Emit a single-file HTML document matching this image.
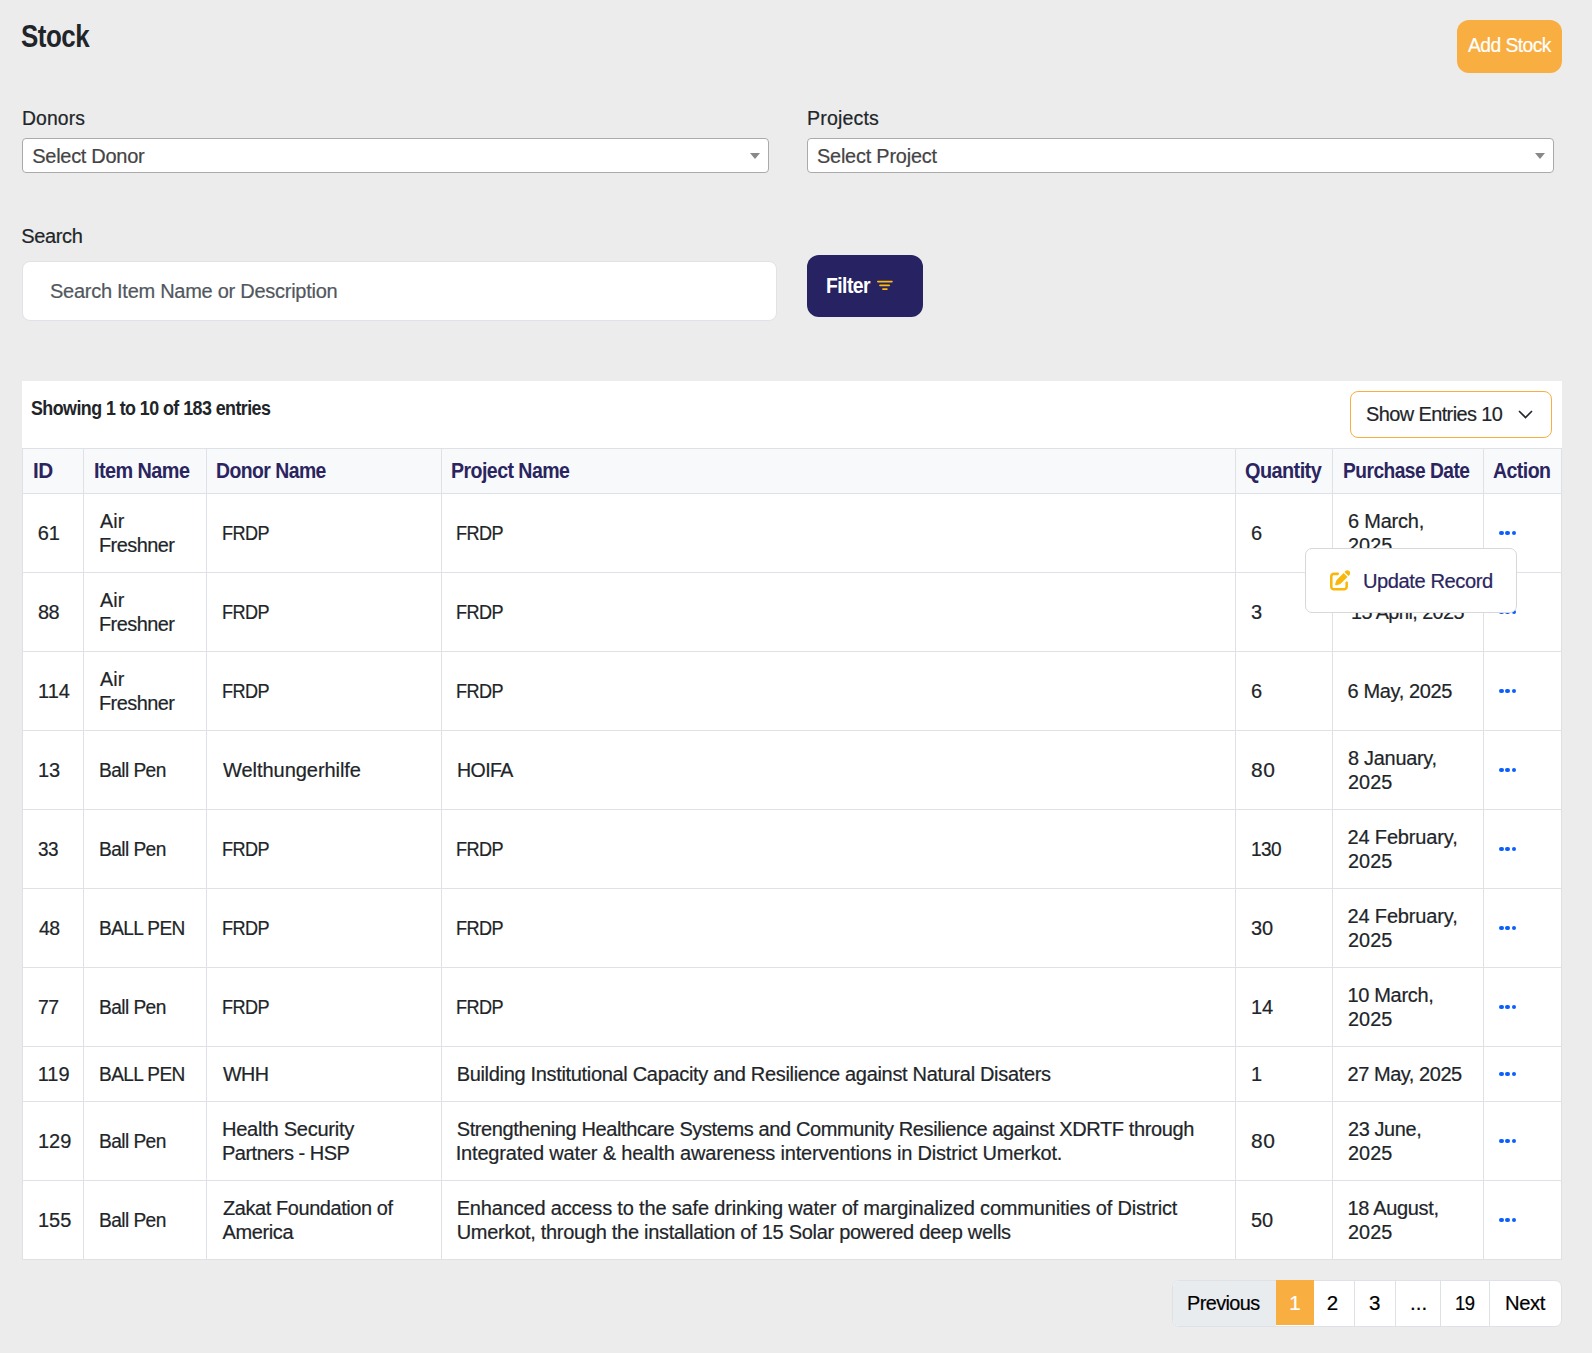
<!DOCTYPE html>
<html><head><meta charset="utf-8"><title>Stock</title>
<style>
html,body{margin:0;padding:0;}
body{width:1592px;height:1353px;background:#ececec;position:relative;overflow:hidden;font-family:"Liberation Sans", sans-serif;}
.t{position:absolute;white-space:nowrap;line-height:1;}
.w4{-webkit-text-stroke:0.2px currentColor;}
.r{position:absolute;}
</style></head><body>
<div class="t" style="left:21.20px;top:21.00px;font-size:31px;color:#212529;font-weight:700;letter-spacing:-0.600px;transform:scaleX(0.8371);transform-origin:0 0;">Stock</div>
<div class="r" style="left:1457px;top:20px;width:105px;height:53px;background:#f9ae42;border-radius:12px;"></div>
<div class="t w4" style="left:1468.00px;top:35.00px;font-size:20px;color:#fff;font-weight:400;letter-spacing:-0.600px;transform:scaleX(0.9651);transform-origin:0 0;">Add Stock</div>
<div class="t w4" style="left:21.90px;top:109.00px;font-size:19.5px;color:#212529;font-weight:400;letter-spacing:0.100px;transform:scaleX(0.9920);transform-origin:0 0;">Donors</div>
<div class="t w4" style="left:806.50px;top:109.00px;font-size:19.5px;color:#212529;font-weight:400;letter-spacing:0.157px;transform:scaleX(1.0043);transform-origin:0 0;">Projects</div>
<div class="r" style="left:22px;top:138px;width:747px;height:35px;background:#fff;border:1px solid #aaa;border-radius:4px;box-sizing:border-box;"></div>
<div class="r" style="left:750px;top:153px;width:0;height:0;border-style:solid;border-width:6px 5px 0 5px;border-color:#888 transparent transparent transparent;"></div>
<div class="r" style="left:807px;top:138px;width:747px;height:35px;background:#fff;border:1px solid #aaa;border-radius:4px;box-sizing:border-box;"></div>
<div class="r" style="left:1535px;top:153px;width:0;height:0;border-style:solid;border-width:6px 5px 0 5px;border-color:#888 transparent transparent transparent;"></div>
<div class="t w4" style="left:32.30px;top:146.00px;font-size:20px;color:#444;font-weight:400;letter-spacing:-0.300px;">Select Donor</div>
<div class="t w4" style="left:817.20px;top:146.00px;font-size:20px;color:#444;font-weight:400;letter-spacing:-0.200px;transform:scaleX(0.9934);transform-origin:0 0;">Select Project</div>
<div class="t w4" style="left:21.20px;top:226.00px;font-size:20px;color:#212529;font-weight:400;letter-spacing:-0.340px;">Search</div>
<div class="r" style="left:22px;top:261px;width:755px;height:60px;background:#fff;border:1px solid #dfe3e8;border-radius:8px;box-sizing:border-box;"></div>
<div class="t w4" style="left:50.00px;top:281.00px;font-size:20px;color:#51575e;font-weight:400;letter-spacing:-0.267px;">Search Item Name or Description</div>
<div class="r" style="left:807px;top:255px;width:116px;height:62px;background:#272262;border-radius:12px;"></div>
<div class="t" style="left:826.20px;top:275.00px;font-size:22px;color:#fff;font-weight:700;letter-spacing:-0.600px;transform:scaleX(0.8781);transform-origin:0 0;">Filter</div>
<svg class="r" style="left:876px;top:280px" width="18" height="12" viewBox="0 0 18 12"><rect x="1" y="0.7" width="15.8" height="1.7" rx="0.8" fill="#fdbb0a"/><rect x="3.2" y="4.55" width="10.8" height="1.7" rx="0.8" fill="#fdbb0a"/><rect x="6.1" y="8.25" width="5.6" height="1.7" rx="0.8" fill="#fdbb0a"/></svg>
<div class="r" style="left:22px;top:381px;width:1540px;height:879px;background:#fff;"></div>
<div class="t" style="left:31.20px;top:399.00px;font-size:19.5px;color:#212529;font-weight:700;letter-spacing:-0.600px;transform:scaleX(0.9150);transform-origin:0 0;">Showing 1 to 10 of 183 entries</div>
<div class="r" style="left:1350px;top:391px;width:202px;height:47px;border:1px solid #f9ae42;border-radius:8px;box-sizing:border-box;"></div>
<div class="t w4" style="left:1365.60px;top:404.00px;font-size:20.5px;color:#212529;font-weight:400;letter-spacing:-0.600px;transform:scaleX(0.9720);transform-origin:0 0;">Show Entries 10</div>
<svg class="r" style="left:1517px;top:408px" width="17" height="13" viewBox="0 0 17 13"><polyline points="2,3 8.5,9.5 15,3" fill="none" stroke="#212529" stroke-width="1.6"/></svg>
<div class="r" style="left:22px;top:448px;width:1540px;height:45px;background:#f8f9fa;"></div>
<div class="r" style="left:22px;top:448px;width:1540px;height:1px;background:#dee2e6;"></div>
<div class="r" style="left:22px;top:493px;width:1540px;height:1px;background:#dee2e6;"></div>
<div class="r" style="left:22px;top:572px;width:1540px;height:1px;background:#dee2e6;"></div>
<div class="r" style="left:22px;top:651px;width:1540px;height:1px;background:#dee2e6;"></div>
<div class="r" style="left:22px;top:730px;width:1540px;height:1px;background:#dee2e6;"></div>
<div class="r" style="left:22px;top:809px;width:1540px;height:1px;background:#dee2e6;"></div>
<div class="r" style="left:22px;top:888px;width:1540px;height:1px;background:#dee2e6;"></div>
<div class="r" style="left:22px;top:967px;width:1540px;height:1px;background:#dee2e6;"></div>
<div class="r" style="left:22px;top:1046px;width:1540px;height:1px;background:#dee2e6;"></div>
<div class="r" style="left:22px;top:1101px;width:1540px;height:1px;background:#dee2e6;"></div>
<div class="r" style="left:22px;top:1180px;width:1540px;height:1px;background:#dee2e6;"></div>
<div class="r" style="left:22px;top:1259px;width:1540px;height:1px;background:#dee2e6;"></div>
<div class="r" style="left:22px;top:448px;width:1px;height:812px;background:#dee2e6;"></div>
<div class="r" style="left:83px;top:448px;width:1px;height:812px;background:#dee2e6;"></div>
<div class="r" style="left:206px;top:448px;width:1px;height:812px;background:#dee2e6;"></div>
<div class="r" style="left:441px;top:448px;width:1px;height:812px;background:#dee2e6;"></div>
<div class="r" style="left:1235px;top:448px;width:1px;height:812px;background:#dee2e6;"></div>
<div class="r" style="left:1332px;top:448px;width:1px;height:812px;background:#dee2e6;"></div>
<div class="r" style="left:1483px;top:448px;width:1px;height:812px;background:#dee2e6;"></div>
<div class="r" style="left:1561px;top:448px;width:1px;height:812px;background:#dee2e6;"></div>
<div class="t" style="left:32.60px;top:461.00px;font-size:21.5px;color:#2a2560;font-weight:700;letter-spacing:-0.600px;transform:scaleX(0.9632);transform-origin:0 0;">ID</div>
<div class="t" style="left:93.70px;top:461.00px;font-size:21.5px;color:#2a2560;font-weight:700;letter-spacing:-0.600px;transform:scaleX(0.9236);transform-origin:0 0;">Item Name</div>
<div class="t" style="left:216.30px;top:461.00px;font-size:21.5px;color:#2a2560;font-weight:700;letter-spacing:-0.600px;transform:scaleX(0.9017);transform-origin:0 0;">Donor Name</div>
<div class="t" style="left:451.00px;top:461.00px;font-size:21.5px;color:#2a2560;font-weight:700;letter-spacing:-0.600px;transform:scaleX(0.9093);transform-origin:0 0;">Project Name</div>
<div class="t" style="left:1245.00px;top:461.00px;font-size:21.5px;color:#2a2560;font-weight:700;letter-spacing:-0.600px;transform:scaleX(0.9244);transform-origin:0 0;">Quantity</div>
<div class="t" style="left:1342.50px;top:461.00px;font-size:21.5px;color:#2a2560;font-weight:700;letter-spacing:-0.600px;transform:scaleX(0.8929);transform-origin:0 0;">Purchase Date</div>
<div class="t" style="left:1493.30px;top:461.00px;font-size:21.5px;color:#2a2560;font-weight:700;letter-spacing:-0.600px;transform:scaleX(0.9081);transform-origin:0 0;">Action</div>
<div class="t w4" style="left:37.70px;top:523.00px;font-size:20px;color:#212529;font-weight:400;letter-spacing:0.000px;">61</div>
<div class="t w4" style="left:99.50px;top:511.00px;font-size:20px;color:#212529;font-weight:400;letter-spacing:0.100px;transform:scaleX(0.9842);transform-origin:0 0;">Air</div>
<div class="t w4" style="left:98.50px;top:535.00px;font-size:20px;color:#212529;font-weight:400;letter-spacing:-0.543px;transform:scaleX(0.9948);transform-origin:0 0;">Freshner</div>
<div class="t w4" style="left:221.50px;top:523.00px;font-size:20px;color:#212529;font-weight:400;letter-spacing:-0.600px;transform:scaleX(0.9041);transform-origin:0 0;">FRDP</div>
<div class="t w4" style="left:455.50px;top:523.00px;font-size:20px;color:#212529;font-weight:400;letter-spacing:-0.600px;transform:scaleX(0.9041);transform-origin:0 0;">FRDP</div>
<div class="t w4" style="left:1251.00px;top:523.00px;font-size:20px;color:#212529;font-weight:400;letter-spacing:0.000px;">6</div>
<div class="t w4" style="left:1347.50px;top:511.00px;font-size:20px;color:#212529;font-weight:400;letter-spacing:-0.200px;transform:scaleX(0.9973);transform-origin:0 0;">6 March,</div>
<div class="t w4" style="left:1347.50px;top:535.00px;font-size:20px;color:#212529;font-weight:400;letter-spacing:0.067px;transform:scaleX(0.9910);transform-origin:0 0;">2025</div>
<div class="r" style="left:1499.10px;top:530.9px;width:4.6px;height:4.6px;border-radius:50%;background:#0b5ffb;"></div>
<div class="r" style="left:1505.35px;top:530.9px;width:4.6px;height:4.6px;border-radius:50%;background:#0b5ffb;"></div>
<div class="r" style="left:1511.60px;top:530.9px;width:4.6px;height:4.6px;border-radius:50%;background:#0b5ffb;"></div>
<div class="t w4" style="left:37.70px;top:602.00px;font-size:20px;color:#212529;font-weight:400;letter-spacing:-0.600px;transform:scaleX(0.9959);transform-origin:0 0;">88</div>
<div class="t w4" style="left:99.50px;top:590.00px;font-size:20px;color:#212529;font-weight:400;letter-spacing:0.100px;transform:scaleX(0.9842);transform-origin:0 0;">Air</div>
<div class="t w4" style="left:98.50px;top:614.00px;font-size:20px;color:#212529;font-weight:400;letter-spacing:-0.543px;transform:scaleX(0.9948);transform-origin:0 0;">Freshner</div>
<div class="t w4" style="left:221.50px;top:602.00px;font-size:20px;color:#212529;font-weight:400;letter-spacing:-0.600px;transform:scaleX(0.9041);transform-origin:0 0;">FRDP</div>
<div class="t w4" style="left:455.50px;top:602.00px;font-size:20px;color:#212529;font-weight:400;letter-spacing:-0.600px;transform:scaleX(0.9041);transform-origin:0 0;">FRDP</div>
<div class="t w4" style="left:1251.00px;top:602.00px;font-size:20px;color:#212529;font-weight:400;letter-spacing:0.000px;">3</div>
<div class="t w4" style="left:1350.60px;top:602.00px;font-size:20px;color:#212529;font-weight:400;letter-spacing:-0.600px;transform:scaleX(0.9903);transform-origin:0 0;">15 April, 2025</div>
<div class="r" style="left:1499.10px;top:609.9px;width:4.6px;height:4.6px;border-radius:50%;background:#0b5ffb;"></div>
<div class="r" style="left:1505.35px;top:609.9px;width:4.6px;height:4.6px;border-radius:50%;background:#0b5ffb;"></div>
<div class="r" style="left:1511.60px;top:609.9px;width:4.6px;height:4.6px;border-radius:50%;background:#0b5ffb;"></div>
<div class="t w4" style="left:38.00px;top:681.00px;font-size:20px;color:#212529;font-weight:400;letter-spacing:0.000px;">114</div>
<div class="t w4" style="left:99.50px;top:669.00px;font-size:20px;color:#212529;font-weight:400;letter-spacing:0.100px;transform:scaleX(0.9842);transform-origin:0 0;">Air</div>
<div class="t w4" style="left:98.50px;top:693.00px;font-size:20px;color:#212529;font-weight:400;letter-spacing:-0.543px;transform:scaleX(0.9948);transform-origin:0 0;">Freshner</div>
<div class="t w4" style="left:221.50px;top:681.00px;font-size:20px;color:#212529;font-weight:400;letter-spacing:-0.600px;transform:scaleX(0.9041);transform-origin:0 0;">FRDP</div>
<div class="t w4" style="left:455.50px;top:681.00px;font-size:20px;color:#212529;font-weight:400;letter-spacing:-0.600px;transform:scaleX(0.9041);transform-origin:0 0;">FRDP</div>
<div class="t w4" style="left:1251.00px;top:681.00px;font-size:20px;color:#212529;font-weight:400;letter-spacing:0.000px;">6</div>
<div class="t w4" style="left:1347.50px;top:681.00px;font-size:20px;color:#212529;font-weight:400;letter-spacing:-0.360px;">6 May, 2025</div>
<div class="r" style="left:1499.10px;top:688.9px;width:4.6px;height:4.6px;border-radius:50%;background:#0b5ffb;"></div>
<div class="r" style="left:1505.35px;top:688.9px;width:4.6px;height:4.6px;border-radius:50%;background:#0b5ffb;"></div>
<div class="r" style="left:1511.60px;top:688.9px;width:4.6px;height:4.6px;border-radius:50%;background:#0b5ffb;"></div>
<div class="t w4" style="left:37.90px;top:760.00px;font-size:20px;color:#212529;font-weight:400;letter-spacing:0.000px;">13</div>
<div class="t w4" style="left:98.50px;top:760.00px;font-size:20px;color:#212529;font-weight:400;letter-spacing:-0.600px;transform:scaleX(0.9574);transform-origin:0 0;">Ball Pen</div>
<div class="t w4" style="left:222.50px;top:760.00px;font-size:20px;color:#212529;font-weight:400;letter-spacing:-0.064px;transform:scaleX(1.0022);transform-origin:0 0;">Welthungerhilfe</div>
<div class="t w4" style="left:456.70px;top:760.00px;font-size:20px;color:#212529;font-weight:400;letter-spacing:-0.600px;transform:scaleX(0.9774);transform-origin:0 0;">HOIFA</div>
<div class="t w4" style="left:1251.00px;top:760.00px;font-size:20px;color:#212529;font-weight:400;letter-spacing:0.600px;transform:scaleX(1.0476);transform-origin:0 0;">80</div>
<div class="t w4" style="left:1347.50px;top:748.00px;font-size:20px;color:#212529;font-weight:400;letter-spacing:-0.244px;transform:scaleX(0.9931);transform-origin:0 0;">8 January,</div>
<div class="t w4" style="left:1347.50px;top:772.00px;font-size:20px;color:#212529;font-weight:400;letter-spacing:0.067px;transform:scaleX(0.9910);transform-origin:0 0;">2025</div>
<div class="r" style="left:1499.10px;top:767.9px;width:4.6px;height:4.6px;border-radius:50%;background:#0b5ffb;"></div>
<div class="r" style="left:1505.35px;top:767.9px;width:4.6px;height:4.6px;border-radius:50%;background:#0b5ffb;"></div>
<div class="r" style="left:1511.60px;top:767.9px;width:4.6px;height:4.6px;border-radius:50%;background:#0b5ffb;"></div>
<div class="t w4" style="left:37.70px;top:839.00px;font-size:20px;color:#212529;font-weight:400;letter-spacing:-0.600px;transform:scaleX(0.9459);transform-origin:0 0;">33</div>
<div class="t w4" style="left:98.50px;top:839.00px;font-size:20px;color:#212529;font-weight:400;letter-spacing:-0.600px;transform:scaleX(0.9574);transform-origin:0 0;">Ball Pen</div>
<div class="t w4" style="left:221.50px;top:839.00px;font-size:20px;color:#212529;font-weight:400;letter-spacing:-0.600px;transform:scaleX(0.9041);transform-origin:0 0;">FRDP</div>
<div class="t w4" style="left:455.50px;top:839.00px;font-size:20px;color:#212529;font-weight:400;letter-spacing:-0.600px;transform:scaleX(0.9041);transform-origin:0 0;">FRDP</div>
<div class="t w4" style="left:1251.00px;top:839.00px;font-size:20px;color:#212529;font-weight:400;letter-spacing:-0.600px;transform:scaleX(0.9519);transform-origin:0 0;">130</div>
<div class="t w4" style="left:1347.50px;top:827.00px;font-size:20px;color:#212529;font-weight:400;letter-spacing:-0.155px;">24 February,</div>
<div class="t w4" style="left:1347.50px;top:851.00px;font-size:20px;color:#212529;font-weight:400;letter-spacing:0.067px;transform:scaleX(0.9910);transform-origin:0 0;">2025</div>
<div class="r" style="left:1499.10px;top:846.9px;width:4.6px;height:4.6px;border-radius:50%;background:#0b5ffb;"></div>
<div class="r" style="left:1505.35px;top:846.9px;width:4.6px;height:4.6px;border-radius:50%;background:#0b5ffb;"></div>
<div class="r" style="left:1511.60px;top:846.9px;width:4.6px;height:4.6px;border-radius:50%;background:#0b5ffb;"></div>
<div class="t w4" style="left:38.70px;top:918.00px;font-size:20px;color:#212529;font-weight:400;letter-spacing:-0.600px;transform:scaleX(0.9717);transform-origin:0 0;">48</div>
<div class="t w4" style="left:98.50px;top:918.00px;font-size:20px;color:#212529;font-weight:400;letter-spacing:-0.600px;transform:scaleX(0.9523);transform-origin:0 0;">BALL PEN</div>
<div class="t w4" style="left:221.50px;top:918.00px;font-size:20px;color:#212529;font-weight:400;letter-spacing:-0.600px;transform:scaleX(0.9041);transform-origin:0 0;">FRDP</div>
<div class="t w4" style="left:455.50px;top:918.00px;font-size:20px;color:#212529;font-weight:400;letter-spacing:-0.600px;transform:scaleX(0.9041);transform-origin:0 0;">FRDP</div>
<div class="t w4" style="left:1251.00px;top:918.00px;font-size:20px;color:#212529;font-weight:400;letter-spacing:0.000px;">30</div>
<div class="t w4" style="left:1347.50px;top:906.00px;font-size:20px;color:#212529;font-weight:400;letter-spacing:-0.155px;">24 February,</div>
<div class="t w4" style="left:1347.50px;top:930.00px;font-size:20px;color:#212529;font-weight:400;letter-spacing:0.067px;transform:scaleX(0.9910);transform-origin:0 0;">2025</div>
<div class="r" style="left:1499.10px;top:925.9px;width:4.6px;height:4.6px;border-radius:50%;background:#0b5ffb;"></div>
<div class="r" style="left:1505.35px;top:925.9px;width:4.6px;height:4.6px;border-radius:50%;background:#0b5ffb;"></div>
<div class="r" style="left:1511.60px;top:925.9px;width:4.6px;height:4.6px;border-radius:50%;background:#0b5ffb;"></div>
<div class="t w4" style="left:37.70px;top:997.00px;font-size:20px;color:#212529;font-weight:400;letter-spacing:-0.600px;transform:scaleX(0.9714);transform-origin:0 0;">77</div>
<div class="t w4" style="left:98.50px;top:997.00px;font-size:20px;color:#212529;font-weight:400;letter-spacing:-0.600px;transform:scaleX(0.9574);transform-origin:0 0;">Ball Pen</div>
<div class="t w4" style="left:221.50px;top:997.00px;font-size:20px;color:#212529;font-weight:400;letter-spacing:-0.600px;transform:scaleX(0.9041);transform-origin:0 0;">FRDP</div>
<div class="t w4" style="left:455.50px;top:997.00px;font-size:20px;color:#212529;font-weight:400;letter-spacing:-0.600px;transform:scaleX(0.9041);transform-origin:0 0;">FRDP</div>
<div class="t w4" style="left:1251.00px;top:997.00px;font-size:20px;color:#212529;font-weight:400;letter-spacing:0.000px;">14</div>
<div class="t w4" style="left:1347.50px;top:985.00px;font-size:20px;color:#212529;font-weight:400;letter-spacing:-0.338px;">10 March,</div>
<div class="t w4" style="left:1347.50px;top:1009.00px;font-size:20px;color:#212529;font-weight:400;letter-spacing:0.067px;transform:scaleX(0.9910);transform-origin:0 0;">2025</div>
<div class="r" style="left:1499.10px;top:1004.9px;width:4.6px;height:4.6px;border-radius:50%;background:#0b5ffb;"></div>
<div class="r" style="left:1505.35px;top:1004.9px;width:4.6px;height:4.6px;border-radius:50%;background:#0b5ffb;"></div>
<div class="r" style="left:1511.60px;top:1004.9px;width:4.6px;height:4.6px;border-radius:50%;background:#0b5ffb;"></div>
<div class="t w4" style="left:37.70px;top:1064.00px;font-size:20px;color:#212529;font-weight:400;letter-spacing:0.000px;">119</div>
<div class="t w4" style="left:98.50px;top:1064.00px;font-size:20px;color:#212529;font-weight:400;letter-spacing:-0.600px;transform:scaleX(0.9523);transform-origin:0 0;">BALL PEN</div>
<div class="t w4" style="left:222.50px;top:1064.00px;font-size:20px;color:#212529;font-weight:400;letter-spacing:-0.600px;transform:scaleX(0.9867);transform-origin:0 0;">WHH</div>
<div class="t w4" style="left:456.70px;top:1064.00px;font-size:20px;color:#212529;font-weight:400;letter-spacing:-0.323px;">Building Institutional Capacity and Resilience against Natural Disaters</div>
<div class="t w4" style="left:1251.00px;top:1064.00px;font-size:20px;color:#212529;font-weight:400;letter-spacing:0.000px;">1</div>
<div class="t w4" style="left:1347.50px;top:1064.00px;font-size:20px;color:#212529;font-weight:400;letter-spacing:-0.455px;">27 May, 2025</div>
<div class="r" style="left:1499.10px;top:1071.9px;width:4.6px;height:4.6px;border-radius:50%;background:#0b5ffb;"></div>
<div class="r" style="left:1505.35px;top:1071.9px;width:4.6px;height:4.6px;border-radius:50%;background:#0b5ffb;"></div>
<div class="r" style="left:1511.60px;top:1071.9px;width:4.6px;height:4.6px;border-radius:50%;background:#0b5ffb;"></div>
<div class="t w4" style="left:38.00px;top:1131.00px;font-size:20px;color:#212529;font-weight:400;letter-spacing:0.000px;">129</div>
<div class="t w4" style="left:98.50px;top:1131.00px;font-size:20px;color:#212529;font-weight:400;letter-spacing:-0.600px;transform:scaleX(0.9574);transform-origin:0 0;">Ball Pen</div>
<div class="t w4" style="left:221.50px;top:1119.00px;font-size:20px;color:#212529;font-weight:400;letter-spacing:-0.293px;transform:scaleX(1.0054);transform-origin:0 0;">Health Security</div>
<div class="t w4" style="left:221.50px;top:1143.00px;font-size:20px;color:#212529;font-weight:400;letter-spacing:-0.531px;transform:scaleX(1.0024);transform-origin:0 0;">Partners - HSP</div>
<div class="t w4" style="left:456.70px;top:1119.00px;font-size:20px;color:#212529;font-weight:400;letter-spacing:-0.386px;">Strengthening Healthcare Systems and Community Resilience against XDRTF through</div>
<div class="t w4" style="left:455.70px;top:1143.00px;font-size:20px;color:#212529;font-weight:400;letter-spacing:-0.181px;">Integrated water &amp; health awareness interventions in District Umerkot.</div>
<div class="t w4" style="left:1251.00px;top:1131.00px;font-size:20px;color:#212529;font-weight:400;letter-spacing:0.600px;transform:scaleX(1.0476);transform-origin:0 0;">80</div>
<div class="t w4" style="left:1347.50px;top:1119.00px;font-size:20px;color:#212529;font-weight:400;letter-spacing:-0.357px;transform:scaleX(0.9931);transform-origin:0 0;">23 June,</div>
<div class="t w4" style="left:1347.50px;top:1143.00px;font-size:20px;color:#212529;font-weight:400;letter-spacing:0.067px;transform:scaleX(0.9910);transform-origin:0 0;">2025</div>
<div class="r" style="left:1499.10px;top:1138.9px;width:4.6px;height:4.6px;border-radius:50%;background:#0b5ffb;"></div>
<div class="r" style="left:1505.35px;top:1138.9px;width:4.6px;height:4.6px;border-radius:50%;background:#0b5ffb;"></div>
<div class="r" style="left:1511.60px;top:1138.9px;width:4.6px;height:4.6px;border-radius:50%;background:#0b5ffb;"></div>
<div class="t w4" style="left:38.00px;top:1210.00px;font-size:20px;color:#212529;font-weight:400;letter-spacing:0.000px;">155</div>
<div class="t w4" style="left:98.50px;top:1210.00px;font-size:20px;color:#212529;font-weight:400;letter-spacing:-0.600px;transform:scaleX(0.9574);transform-origin:0 0;">Ball Pen</div>
<div class="t w4" style="left:222.50px;top:1198.00px;font-size:20px;color:#212529;font-weight:400;letter-spacing:-0.400px;transform:scaleX(0.9965);transform-origin:0 0;">Zakat Foundation of</div>
<div class="t w4" style="left:222.50px;top:1222.00px;font-size:20px;color:#212529;font-weight:400;letter-spacing:-0.383px;">America</div>
<div class="t w4" style="left:456.70px;top:1198.00px;font-size:20px;color:#212529;font-weight:400;letter-spacing:-0.174px;">Enhanced access to the safe drinking water of marginalized communities of District</div>
<div class="t w4" style="left:456.70px;top:1222.00px;font-size:20px;color:#212529;font-weight:400;letter-spacing:-0.289px;">Umerkot, through the installation of 15 Solar powered deep wells</div>
<div class="t w4" style="left:1251.00px;top:1210.00px;font-size:20px;color:#212529;font-weight:400;letter-spacing:0.000px;">50</div>
<div class="t w4" style="left:1347.50px;top:1198.00px;font-size:20px;color:#212529;font-weight:400;letter-spacing:-0.333px;">18 August,</div>
<div class="t w4" style="left:1347.50px;top:1222.00px;font-size:20px;color:#212529;font-weight:400;letter-spacing:0.067px;transform:scaleX(0.9910);transform-origin:0 0;">2025</div>
<div class="r" style="left:1499.10px;top:1217.9px;width:4.6px;height:4.6px;border-radius:50%;background:#0b5ffb;"></div>
<div class="r" style="left:1505.35px;top:1217.9px;width:4.6px;height:4.6px;border-radius:50%;background:#0b5ffb;"></div>
<div class="r" style="left:1511.60px;top:1217.9px;width:4.6px;height:4.6px;border-radius:50%;background:#0b5ffb;"></div>
<div class="r" style="left:1305px;top:548px;width:212px;height:65px;background:#fff;border:1px solid #d8d8d8;border-radius:7px;box-sizing:border-box;"></div>
<svg class="r" style="left:1329.5px;top:570px" width="20.5" height="20.5" viewBox="0 0 512 512"><path fill="#f9b70a" d="M471.6 21.7c-21.9-21.9-57.3-21.9-79.2 0L362.3 51.7l97.9 97.9 30.1-30.1c21.9-21.9 21.9-57.3 0-79.2L471.6 21.7zm-299.2 220c-6.1 6.1-10.8 13.6-13.5 21.9l-29.6 88.8c-2.9 8.6-.6 18.1 5.8 24.6s15.9 8.7 24.6 5.8l88.8-29.6c8.2-2.7 15.7-7.4 21.9-13.5L437.7 172.3 339.7 74.3 172.4 241.7zM96 64C43 64 0 107 0 160V416c0 53 43 96 96 96H352c53 0 96-43 96-96V320c0-17.7-14.3-32-32-32s-32 14.3-32 32v96c0 17.7-14.3 32-32 32H96c-17.7 0-32-14.3-32-32V160c0-17.7 14.3-32 32-32h96c17.7 0 32-14.3 32-32s-14.3-32-32-32H96z"/></svg>
<div class="t w4" style="left:1362.60px;top:571.00px;font-size:20px;color:#2a2560;font-weight:400;letter-spacing:-0.425px;transform:scaleX(1.0055);transform-origin:0 0;">Update Record</div>
<div class="r" style="left:1172px;top:1280px;width:390px;height:47px;background:#fff;border:1px solid #dee2e6;border-radius:7px;box-sizing:border-box;"></div>
<div class="r" style="left:1173px;top:1281px;width:103px;height:45px;background:#e9ecef;border-radius:6px 0 0 6px;"></div>
<div class="r" style="left:1276px;top:1280px;width:38px;height:45px;background:#f9ae42;"></div>
<div class="r" style="left:1354px;top:1281px;width:1px;height:45px;background:#dee2e6;"></div>
<div class="r" style="left:1395px;top:1281px;width:1px;height:45px;background:#dee2e6;"></div>
<div class="r" style="left:1440px;top:1281px;width:1px;height:45px;background:#dee2e6;"></div>
<div class="r" style="left:1489px;top:1281px;width:1px;height:45px;background:#dee2e6;"></div>
<div class="t w4" style="left:1187.30px;top:1293.00px;font-size:20.5px;color:#000;font-weight:400;letter-spacing:-0.600px;transform:scaleX(0.9677);transform-origin:0 0;">Previous</div>
<div class="t w4" style="left:1289.30px;top:1293.00px;font-size:20.5px;color:#fff;font-weight:400;letter-spacing:0.000px;">1</div>
<div class="t w4" style="left:1326.80px;top:1293.00px;font-size:20.5px;color:#000;font-weight:400;letter-spacing:0.000px;">2</div>
<div class="t w4" style="left:1369.00px;top:1293.00px;font-size:20.5px;color:#000;font-weight:400;letter-spacing:0.000px;">3</div>
<div class="t w4" style="left:1410.00px;top:1293.00px;font-size:20.5px;color:#000;font-weight:400;letter-spacing:0.000px;">...</div>
<div class="t w4" style="left:1454.60px;top:1293.00px;font-size:20.5px;color:#000;font-weight:400;letter-spacing:-0.600px;transform:scaleX(0.9000);transform-origin:0 0;">19</div>
<div class="t w4" style="left:1505.00px;top:1293.00px;font-size:20.5px;color:#000;font-weight:400;letter-spacing:-0.400px;transform:scaleX(0.9851);transform-origin:0 0;">Next</div>
</body></html>
